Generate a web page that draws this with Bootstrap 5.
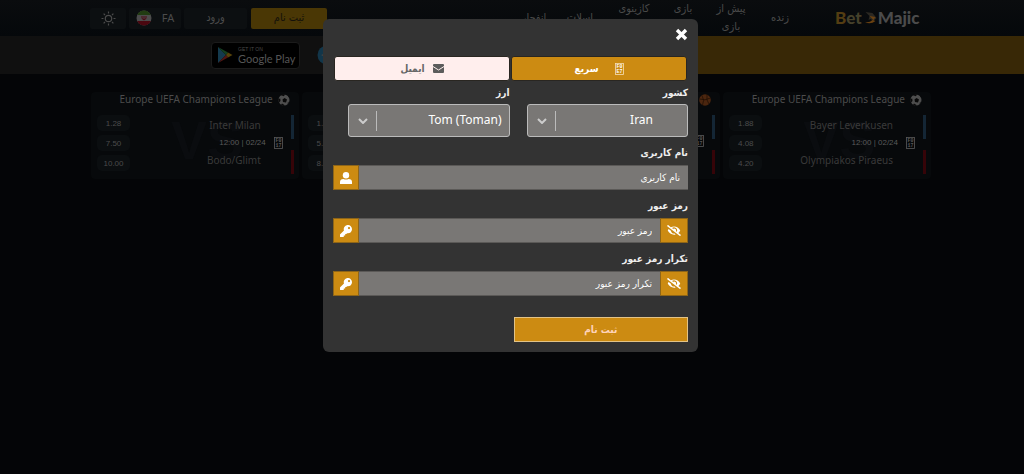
<!DOCTYPE html>
<html lang="fa" dir="rtl">
<head>
<meta charset="utf-8">
<meta name="viewport" content="width=device-width, initial-scale=1">
<title>BetMajic</title>
<link rel="stylesheet" href="https://cdn.jsdelivr.net/npm/bootstrap@5.3.0/dist/css/bootstrap.min.css">
<style>
:root{--gold:#cc8b12}
body{background:#040507;color:#4a4a4a;font-family:"DejaVu Sans Condensed","DejaVu Sans",sans-serif;font-size:10px;line-height:16px;min-height:100vh}
a{color:inherit;text-decoration:none}
svg{flex-shrink:0}
.wrap{max-width:844px;width:100%;margin:0 auto}
.top{background:linear-gradient(#0a0c0e,#05080b);height:36px}
.brand{font:900 17px/20px Lato,sans-serif;color:#4b4b4b;width:83px;margin-right:16px}
.brand b{color:#543d12;font-weight:900}
.brand i{font-style:normal;color:#45402a}
.menu a{text-align:center;line-height:18px;font-size:11px;white-space:nowrap}
.menu{display:grid;grid-template-columns:46px 52px 44px 54px 54px 38px;margin-right:32px;height:36px}
.tools{gap:3px;margin-right:auto}
.tools .btn{background:#0c0f11;color:#4b4b4b;border:0;border-radius:2px;height:21px;padding:0;font-size:11px;line-height:20px}
.tools .join{background:#4a3705;color:#14110a;width:76px;margin-left:1px}
.login{width:63px}.lang{width:52px;gap:10px}.theme{width:36px}
.latin{font-family:"Noto Sans",sans-serif}
.promo{height:38px;background:linear-gradient(90deg,#101010 0 45%,#382806 55% 100%)}
.promo .wrap{padding-left:121px;gap:17px}
.play{width:89px;height:27px;background:#000;border:1px solid #1b1b1b;border-radius:4px;padding:0 5px;gap:5px}
.play small{font:5px/7px "Liberation Sans",sans-serif;color:#4a4a4a}
.play span span{font:11px/12px Lato,sans-serif;color:#555}
.games{display:grid;grid-template-columns:repeat(4,minmax(0,1fr));gap:3px;padding:18px 3px 0 1px}
.game{background:#07090b;border-radius:4px;height:87px;position:relative;overflow:hidden}
.game::before{content:"VS";direction:ltr;position:absolute;left:80px;top:24px;font:bold 54px/48px "Liberation Sans",sans-serif;color:#0a0c0f}
.game header{height:15px;padding-right:9px;gap:5px;font:10px/15px "Noto Sans",sans-serif;color:#4c4c4c}
.rows{position:relative;padding:8px 5px 0 6px}
.game .no-head{padding-top:23px}
.bars{width:3px;height:59px;gap:11px}
.bars i{flex:1}
.blue{background:#142635}.red{background:#360408}
.teams{width:120px;font:10px/20px "Noto Sans",sans-serif;color:#3a3a3a;direction:ltr}
.when{font:8px/15px "Liberation Sans",sans-serif;color:#5a5a5a;gap:8px}
.name{padding-right:22px}
.odds{gap:4px}
.odds .btn{width:33px;height:16px;border:0;border-radius:5px;background:#0b0e10;color:#4c4c4c;font:8px/15px "Liberation Sans",sans-serif;padding:0}
.modal{padding-right:3px}
.modal-dialog{max-width:375px;margin:19px auto}
.modal-content{background:#333;border:0;border-radius:6px;color:#eee;padding:0 10px 10px}
.close{height:37px;padding-bottom:7px}
.close button{background:none;border:0;padding:0;width:13px;line-height:0}
.tab{height:25px;border:1px solid #292621;border-radius:3px;padding:0;font-size:10px;line-height:22px;background:var(--gold);color:#fff;font-weight:bold;gap:8px}
.tab:hover{background:var(--gold);color:#fff}
.tab.off{background:#ffeeed;color:#666}
.tabs{gap:1px;padding:0 1px}
.field{margin-top:9px}
.field label{display:block;height:14px;line-height:14px;font-weight:bold;margin-bottom:5px}
.first{margin-top:5px}
.first label{margin-bottom:4px}
.pick{display:block;width:calc(100% - 15px);height:33px;border:1px solid #bbb;border-radius:3px;color:#fff;font:12px/20px "Noto Sans",sans-serif;direction:ltr;text-align:right;text-align-last:right;appearance:none;padding:0 7px 2px 30px;
background:url("data:image/svg+xml,%3Csvg xmlns='http://www.w3.org/2000/svg' viewBox='0 0 10 6'%3E%3Cpath d='M1 1l4 4 4-4' fill='none' stroke='%23ccc' stroke-width='2'/%3E%3C/svg%3E") 9px 13px/10px 6px no-repeat,linear-gradient(#bbb,#bbb) 27px 6px/1px 20px no-repeat,#797775}
.country{padding-right:34px}
.pair{gap:2px}
.line{height:25px}
.line .form-control{height:25px;min-height:0;border:1px solid #5b5957;border-width:1px 0;border-radius:0!important;background:#797775;color:#fff;font-size:10px;line-height:16px;padding:0 8px;margin:0!important}
.line .form-control::placeholder{color:#fff;opacity:1}
.line .input-group-text,.line .btn{width:26px;border:1px solid #8e6518;border-radius:0!important;background:var(--gold);color:#fff;padding:0;margin:0!important;display:flex;align-items:center;justify-content:center}
.line .btn{width:28px}
.send{width:calc(50% - 3px);height:25px;margin-top:21px;border:1px solid #e2c387;border-radius:0;background:var(--gold);color:#ffd3ba;font-size:10px;font-weight:bold;line-height:20px;padding:0}
</style>
</head>
<body>
<svg class="d-none" aria-hidden="true">
<symbol id="key" viewBox="0 0 512 512"><path fill="currentColor" d="M512 176c0 97-79 176-176 176-11 0-22-1-32-3l-24 27a24 24 0 0 1-18 8h-38v40a24 24 0 0 1-24 24h-40v40a24 24 0 0 1-24 24H24a24 24 0 0 1-24-24v-78c0-6 3-12 7-17l162-162A176 176 0 1 1 512 176zM336 128a48 48 0 1 0 96 0 48 48 0 0 0-96 0z"/></symbol>
<symbol id="eye" viewBox="0 0 640 512"><path fill="currentColor" d="M320 400c-76 0-137-59-143-133L72 186c-14 17-27 35-37 55a32 32 0 0 0 0 29c54 106 162 178 285 178 27 0 53-4 78-10l-52-40c-8 1-17 2-26 2zm314 58L523 373c34-28 62-63 82-103a32 32 0 0 0 0-29C551 135 443 64 320 64c-52 0-102 13-147 36L46 3a16 16 0 0 0-23 3L3 31a16 16 0 0 0 3 23l588 455a16 16 0 0 0 23-3l20-25a16 16 0 0 0-3-23zM450 317l-39-31a95 95 0 0 0-117-122 47 47 0 0 1 10 28l-2 10-74-57a144 144 0 0 1 222 172z"/></symbol>
<symbol id="ball" viewBox="0 0 12 12"><circle cx="6" cy="6" r="5.500" fill="#4e4e4e"/><path d="M6.500 4L9 5.500 8 8.500 5 8 4.500 5.500zM3 1.200L6 2.200 7 .3 4.500.2zM.3 5L2.200 4.500 2.500 7 1 8.500zM11.700 4L10.500 3 9.500 1.500l1.500 1zM3 11l1-1.500L6.500 11 6 12zM10 10l-.5-1L11 7.500z" fill="#090909"/></symbol>
<symbol id="basket" viewBox="0 0 12 12"><circle cx="6" cy="6" r="5.800" fill="#4b260f"/><path d="M.5 5q5.500 2 11-1M3 1.500q3 5 .5 9.500M8 .5q-1 6 2 9.500" fill="none" stroke="#1d0e05" stroke-width=".7"/></symbol>
<symbol id="clock" viewBox="0 0 9 12"><rect x=".5" y=".5" width="8" height="11" fill="none" stroke="currentColor" stroke-width=".8"/><g font-family="Liberation Mono" font-size="5" font-weight="bold" fill="currentColor" text-anchor="middle"><text x="4.500" y="5.300">F0</text><text x="4.500" y="10.300">17</text></g></symbol>
</svg>

<nav class="top"><div class="wrap d-flex align-items-center h-100">
<a class="brand d-flex align-items-center" dir="ltr" href="#"><b>B</b><i>et</i><svg width="16" height="16" viewBox="0 0 15 16"><path d="M3 2l7 1 4 5-3 3-3-2-2 1 1-4z" fill="#2b2822"/><path d="M7 6l6 1-2 3zM2 12q5 1 8-2l3 1q-5 4-11 1z" fill="#6b4110"/></svg>Majic</a>
<div class="menu align-items-center">
<a href="#">زنده</a><a href="#">پیش از<br>بازی</a><a href="#">بازی<br>زنده</a><a href="#">کازینوی<br>زنده</a><a href="#">اسلات</a><a href="#">انفجار</a>
</div>
<div class="tools d-flex">
<button class="btn join">ثبت نام</button>
<button class="btn login">ورود</button>
<button class="btn lang latin d-flex align-items-center justify-content-center">FA<svg width="16" height="16" viewBox="0 0 16 16"><clipPath id="c"><circle cx="8" cy="8" r="7.500"/></clipPath><g clip-path="url(#c)"><path fill="#4c4c4c" d="M0 0h16v16H0z"/><path fill="#213c12" d="M0 0h16v5H0z"/><path fill="#4a0710" d="M0 11h16v5H0z"/><path d="M6 6q-1 3 2 4 3-1 2-4M8 6v4" fill="none" stroke="#4a0710"/></g></svg></button>
<button class="btn theme" aria-label="حالت روشن"><svg width="15" height="15" viewBox="0 0 15 15" fill="none" stroke="#4b4b4b" stroke-width="1.200"><circle cx="7.500" cy="7.500" r="3.200"/><path d="M7.500 .5v2M7.500 12.500v2M.5 7.500h2M12.500 7.500h2M2.600 2.600L4 4M11 11l1.400 1.400M2.600 12.400L4 11M11 4l1.400-1.400"/></svg></button>
</div></div></nav>

<div class="promo"><div class="wrap h-100 d-flex align-items-center justify-content-end">
<a href="#" aria-label="Telegram"><svg width="20" height="20" viewBox="0 0 20 20"><circle cx="10" cy="10" r="9.500" fill="#12364a"/><path d="M4 10l11-4-2 9-3-2-2 2v-3z" fill="#444"/></svg></a>
<a class="play d-flex align-items-center" dir="ltr" href="#"><svg width="16" height="18" viewBox="0 0 16 18"><path d="M1 1v16l8-8z" fill="#143a4e"/><path d="M1 1l10 5.500L9 9z" fill="#15401f"/><path d="M1 17l10-5.500L9 9z" fill="#501512"/><path d="M11 6.500L15.500 9 11 11.500 9 9z" fill="#57430a"/></svg><span class="d-flex flex-column"><small>GET IT ON</small><span class="text-nowrap">Google Play</span></span></a>
</div></div>

<main class="wrap games">
<article class="game"><header class="d-flex align-items-center"><svg width="12" height="12"><use href="#ball"/></svg><span dir="ltr">Europe UEFA Champions League</span></header>
<div class="rows d-flex justify-content-between"><div class="d-flex"><div class="bars d-flex flex-column"><i class="blue"></i><i class="red"></i></div><div class="teams text-end me-2"><div class="name">Bayer Leverkusen</div><div class="when d-flex align-items-center justify-content-end">12:00 | 02/24<svg width="9" height="12"><use href="#clock"/></svg></div><div class="name">Olympiakos Piraeus</div></div></div>
<div class="odds d-flex flex-column"><button class="btn">1.88</button><button class="btn">4.08</button><button class="btn">4.20</button></div></div></article>
<article class="game"><header class="d-flex align-items-center"><svg width="12" height="12"><use href="#basket"/></svg></header>
<div class="rows d-flex justify-content-between"><div class="d-flex"><div class="bars d-flex flex-column"><i class="blue"></i><i class="red"></i></div><div class="teams text-end me-2"><div class="name">&nbsp;</div><div class="when d-flex align-items-center justify-content-end"><svg width="9" height="12"><use href="#clock"/></svg></div></div></div></div></article>
<article class="game"><div class="rows no-head d-flex justify-content-end"><div class="odds d-flex flex-column"><button class="btn">1.40</button><button class="btn">5.00</button><button class="btn">8.00</button></div></div></article>
<article class="game"><header class="d-flex align-items-center"><svg width="12" height="12"><use href="#ball"/></svg><span dir="ltr">Europe UEFA Champions League</span></header>
<div class="rows d-flex justify-content-between"><div class="d-flex"><div class="bars d-flex flex-column"><i class="blue"></i><i class="red"></i></div><div class="teams text-end me-2"><div class="name">Inter Milan</div><div class="when d-flex align-items-center justify-content-end">12:00 | 02/24<svg width="9" height="12"><use href="#clock"/></svg></div><div class="name">Bodo/Glimt</div></div></div>
<div class="odds d-flex flex-column"><button class="btn">1.28</button><button class="btn">7.50</button><button class="btn">10.00</button></div></div></article>
</main>

<div class="modal d-block" role="dialog" aria-label="ثبت نام"><div class="modal-dialog"><form class="modal-content">
<div class="close d-flex align-items-center justify-content-start"><button type="button" aria-label="بستن"><svg width="13" height="13" viewBox="0 0 13 13"><path d="M2 2l9 9M11 2l-9 9" stroke="#fff" stroke-width="3.400"/></svg></button></div>
<div class="tabs d-flex">
<button type="button" class="btn tab w-50 d-flex align-items-center justify-content-center"><svg class="ms-2" width="9" height="12" viewBox="0 0 9 12"><rect x=".5" y=".5" width="8" height="11" fill="none" stroke="#f5dfb5" stroke-width=".8"/><g font-family="Liberation Mono" font-size="5" font-weight="bold" fill="#fff" text-anchor="middle"><text x="4.500" y="5.300">F0</text><text x="4.500" y="10.300">E7</text></g></svg>سریع</button>
<button type="button" class="btn tab off w-50 d-flex align-items-center justify-content-center"><svg width="11" height="9" viewBox="0 0 11 9"><rect width="11" height="9" rx="1" fill="#5c5c5c"/><path d="M0 2.500l5.500 3.500L11 2.500" fill="none" stroke="#ffeeed"/></svg>ایمیل</button>
</div>
<div class="d-flex pair">
<div class="field first w-50"><label for="country">کشور</label><select id="country" class="pick country"><option>Iran</option></select></div>
<div class="field first w-50"><label for="currency">ارز</label><select id="currency" class="pick"><option>Tom (Toman)</option></select></div>
</div>
<div class="field"><label for="user">نام کاربری</label><div class="input-group line flex-nowrap"><input id="user" class="form-control" placeholder="نام کاربری"><span class="input-group-text"><svg width="12" height="12" viewBox="0 0 12 12" fill="#fff"><circle cx="6" cy="3.200" r="3.200"/><path d="M0 12v-2q0-3 3.500-3Q6 8.200 8.500 7 12 7 12 10v2z"/></svg></span></div></div>
<div class="field"><label for="pass">رمز عبور</label><div class="input-group line flex-nowrap"><button type="button" class="btn" aria-label="نمایش"><svg width="14" height="11"><use href="#eye"/></svg></button><input id="pass" type="password" class="form-control" placeholder="رمز عبور"><span class="input-group-text"><svg width="12" height="12"><use href="#key"/></svg></span></div></div>
<div class="field"><label for="again">تکرار رمز عبور</label><div class="input-group line flex-nowrap"><button type="button" class="btn" aria-label="نمایش"><svg width="14" height="11"><use href="#eye"/></svg></button><input id="again" type="password" class="form-control" placeholder="تکرار رمز عبور"><span class="input-group-text"><svg width="12" height="12"><use href="#key"/></svg></span></div></div>
<button class="btn send" type="button">ثبت نام</button>
</form></div></div>
<script src="https://cdn.jsdelivr.net/npm/bootstrap@5.3.0/dist/js/bootstrap.bundle.min.js"></script>
</body>
</html>
